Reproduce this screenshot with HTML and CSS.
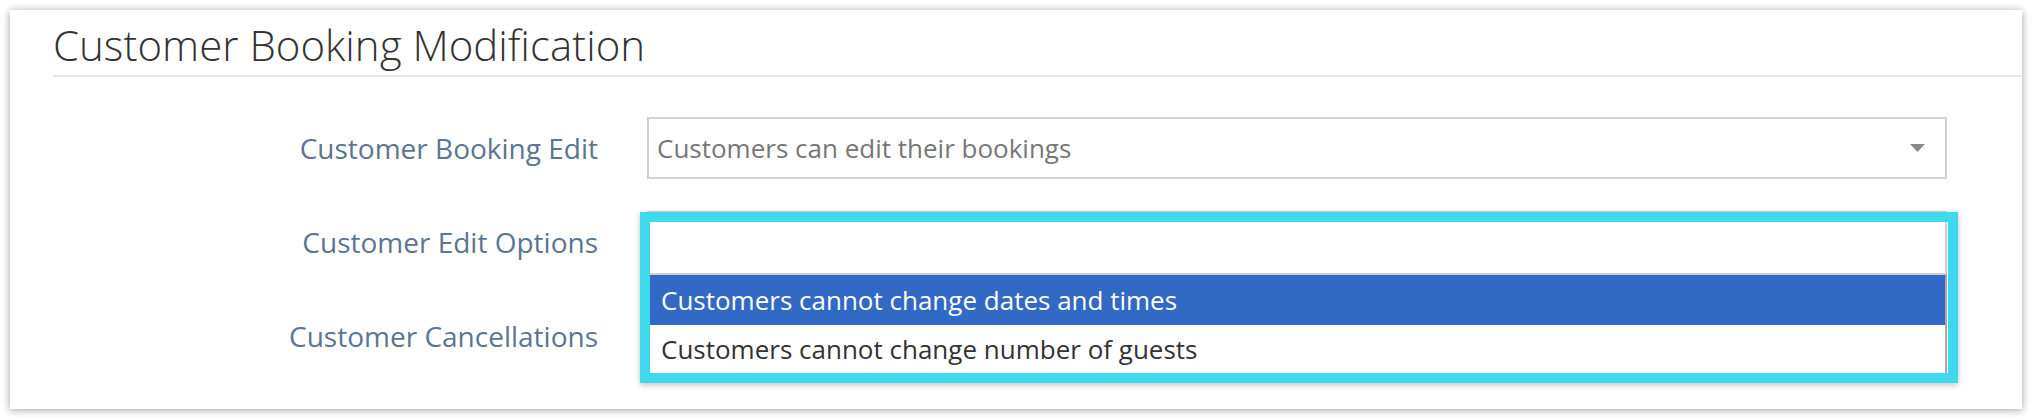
FILE: index.html
```html
<!DOCTYPE html>
<html lang="en">
<head>
<meta charset="utf-8">
<title>Customer Booking Modification</title>
<link rel="stylesheet" href="styles.css">
</head>
<body>
  <section class="card">
    <h2 class="card-title">Customer Booking Modification</h2>
    <div class="form">
      <div class="row">
        <label class="label">Customer Booking Edit</label>
        <div class="field">
          <div class="select">
            <span class="select-value">Customers can edit their bookings</span>
            <svg class="arrow" width="15" height="8" viewBox="0 0 15 8"><path d="M0 0H15L7.5 8Z" fill="#888"/></svg>
          </div>
        </div>
      </div>
      <div class="row">
        <label class="label">Customer Edit Options</label>
        <div class="field">
          <div class="multi"></div>
          <ul class="dropdown">
            <li class="option option-active">Customers cannot change dates and times</li>
            <li class="option">Customers cannot change number of guests</li>
          </ul>
          <div class="highlight"></div>
        </div>
      </div>
      <div class="row">
        <label class="label">Customer Cancellations</label>
        <div class="field"></div>
      </div>
    </div>
  </section>
</body>
</html>
```
FILE: styles.css
```css
html, body {
  margin: 0;
  padding: 0;
  background: #ffffff;
}

body {
  padding: 10px;
  font-family: "Open Sans", "Noto Sans", "Liberation Sans", sans-serif;
}

.card {
  box-sizing: border-box;
  height: 399px;
  background: #ffffff;
  box-shadow: 0 1px 8px rgba(0, 0, 0, 0.38);
  padding: 11px 75px 0 43px;
}

.card-title {
  margin: 0;
  font-family: "Open Sans Light", "Open Sans", "Noto Sans", sans-serif;
  font-size: 42px;
  font-weight: 300;
  line-height: 48px;
  color: #333333;
  padding-bottom: 6px;
  border-bottom: 2px solid #e6e6e6;
  margin-right: -75px;
}

.form {
  margin-top: 24px;
}

.row {
  display: flex;
  align-items: center;
  height: 94px;
}

.label {
  width: 545px;
  flex: none;
  text-align: right;
  font-size: 28px;
  color: #5b7592;
}

.field {
  position: relative;
  margin-left: 49px;
  width: 1300px;
  flex: none;
}

.select {
  box-sizing: border-box;
  height: 62px;
  border: 2px solid #d2d2d2;
  display: flex;
  align-items: center;
  justify-content: space-between;
  padding: 0 20px 0 8px;
  background: #fff;
}

.select-value {
  font-size: 26px;
  color: #777777;
}

.multi {
  box-sizing: border-box;
  height: 62px;
  border: 2px solid #d2d2d2;
  border-bottom-width: 0;
  background: #fff;
}

.dropdown {
  position: absolute;
  top: 100%;
  left: 0;
  right: 0;
  margin: 0;
  padding: 0;
  list-style: none;
  background: #fff;
  border: 2px solid #cfcfcf;
  border-right-color: #a8a8a8;
  border-bottom-width: 1px;
  z-index: 2;
}

.option {
  font-size: 26px;
  line-height: 48px;
  padding-left: 12px;
  color: #333333;
}

.option-active {
  line-height: 50px;
  background: #3169c4;
  color: #ffffff;
}

.highlight {
  position: absolute;
  left: -7px;
  top: 1px;
  width: 1318px;
  height: 171px;
  box-sizing: border-box;
  border: 10px solid #3ed9ed;
  box-shadow: 0 2px 6px rgba(0, 0, 0, 0.25);
  z-index: 3;
  pointer-events: none;
}
```
